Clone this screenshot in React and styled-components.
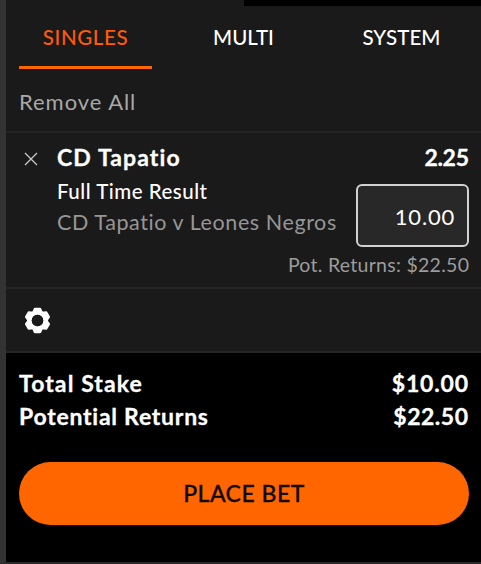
import React from "react";
import styled, { createGlobalStyle } from "styled-components";

const Global = createGlobalStyle`
  *, *::before, *::after { box-sizing: border-box; }
  body {
    margin: 0;
    background: #1a1a1a;
    font-family: "Lato", "Liberation Sans", sans-serif;
    font-variant-ligatures: none;
  }
  button, input { font: inherit; margin: 0; }
`;

const Slip = styled.main`
  width: 481px;
  height: 564px;
  overflow: hidden;
  display: flex;
  flex-direction: column;
  border-left: 6px solid #333;
  border-bottom: 2px solid #2b2829;
  background: #1a1a1a;
  color: #fff;
`;

const TopEdge = styled.div`
  flex: none;
  height: 6px;
  margin-left: 238px;
  background: #000;
`;

const Tabs = styled.nav`
  flex: none;
  display: flex;
  gap: 25px;
  height: 63px;
  padding-left: 13px;
`;

const Tab = styled.button`
  width: 133px;
  height: 63px;
  padding: 1px 0 0;
  border: 0;
  border-bottom: 3px solid ${(p) => (p.$active ? "#ff6600" : "transparent")};
  background: none;
  color: ${(p) => (p.$active ? "#ff5a0a" : "#fff")};
  font-size: 20.5px;
  font-weight: 500;
  letter-spacing: ${(p) => p.$track || 0}px;
  line-height: 60px;
  white-space: nowrap;
  text-align: center;
`;

const Actions = styled.div`
  flex: none;
  height: 64px;
  padding: 0 13px;
  border-bottom: 2px solid #242424;
`;

const Label = styled.span`
  display: block;
  white-space: nowrap;
  color: ${(p) => p.$color || "#fff"};
  font-size: ${(p) => p.$size}px;
  font-weight: ${(p) => p.$weight || 400};
  line-height: ${(p) => p.$line}px;
  letter-spacing: ${(p) => p.$track || 0}px;
  margin-right: ${(p) => -(p.$track || 0)}px;
  -webkit-text-stroke: ${(p) => (p.$weight === 700 ? 0.3 : 0)}px currentColor;
`;

const Selection = styled.section`
  flex: none;
  height: 156px;
  display: grid;
  grid-template-columns: 38px 1fr 113px;
  grid-template-rows: 51px 63px 40px;
  padding: 0 12px 0 13px;
  border-bottom: 2px solid #242424;
`;

const Remove = styled.button`
  grid-row: 1 / 3;
  align-self: start;
  display: flex;
  padding: 19px 0 0 5px;
  border: 0;
  background: none;
`;

const Details = styled.div`
  grid-row: 1 / 3;
  min-width: 0;
`;

const Odds = styled.div`
  display: flex;
  justify-content: flex-end;
`;

const Stake = styled.input`
  width: 113px;
  height: 63px;
  padding: 2px 12px 0 0;
  border: 2px solid #d2d2d2;
  border-radius: 6px;
  background: #282828;
  color: #fff;
  font-size: 22px;
  letter-spacing: 0.8px;
  text-align: right;
  outline: none;
`;

const Returns = styled.div`
  grid-column: 1 / 4;
  display: flex;
  justify-content: flex-end;
`;

const Settings = styled.div`
  flex: none;
  height: 64px;
  display: flex;
  align-items: center;
  padding-left: 18px;
  border-bottom: 2px solid #242424;
`;

const Footer = styled.footer`
  flex: 1;
  padding: 14px 13px 0;
  background: #000;
`;

const TotalRow = styled.div`
  display: flex;
  justify-content: space-between;
  height: 33px;
`;

const PlaceBet = styled.button`
  display: block;
  width: 450px;
  height: 63px;
  margin-top: 29px;
  padding: 0 0 1px;
  border: 0;
  border-radius: 32px;
  background: #ff6600;
  color: #120700;
  font-size: 23px;
  font-weight: 500;
  letter-spacing: 0.5px;
  line-height: 60px;
  -webkit-text-stroke: 0.3px currentColor;
`;

function Cross() {
  return (
    <svg width="14" height="14" viewBox="0 0 14 14" stroke="#c9c9c9" strokeWidth="1.3">
      <path d="M1 1 13 13M13 1 1 13" />
    </svg>
  );
}

function Gear() {
  return (
    <svg width="27" height="27" viewBox="-13.5 -13.5 27 27">
      <g fill="#fff">
        {[0, 60, 120, 180, 240, 300].map((a) => (
          <path key={a} transform={`rotate(${a})`} d="M-5.4-8-3.7-12Q-3.4-12.8-2.5-12.8H2.5Q3.4-12.8 3.7-12L5.4-8Z" />
        ))}
      </g>
      <circle r="8" fill="none" stroke="#fff" strokeWidth="4.6" />
      <circle r="5.8" fill="#1a1a1a" />
    </svg>
  );
}

export default function App() {
  return (
    <>
      <Global />
      <Slip>
        <TopEdge />
        <Tabs>
          <Tab $active $track={0.65}>SINGLES</Tab>
          <Tab>MULTI</Tab>
          <Tab $track={0.1}>SYSTEM</Tab>
        </Tabs>
        <Actions>
          <Label $size={22} $line={66} $track={0.95} $color="#a8a8a8">Remove All</Label>
        </Actions>
        <Selection>
          <Remove aria-label="Remove selection"><Cross /></Remove>
          <Details>
            <Label $size={23} $line={49} $weight={700} $track={1.1}>CD Tapatio</Label>
            <Label $size={20.5} $line={18} $weight={500} $track={0.5}>Full Time Result</Label>
            <Label $size={21.5} $line={44} $track={0.58} $color="#969696">CD Tapatio v Leones Negros</Label>
          </Details>
          <Odds><Label $size={23} $line={49} $weight={700} $track={-0.3}>2.25</Label></Odds>
          <Stake defaultValue="10.00" aria-label="Stake" />
          <Returns><Label $size={19.5} $line={36} $track={0.28} $color="#9c9c9c">Pot. Returns: $22.50</Label></Returns>
        </Selection>
        <Settings><Gear /></Settings>
        <Footer>
          <TotalRow>
            <Label $size={23} $line={33} $weight={700} $track={1.1}>Total Stake</Label>
            <Label $size={23} $line={33} $weight={700} $track={0.8}>$10.00</Label>
          </TotalRow>
          <TotalRow>
            <Label $size={23} $line={33} $weight={700} $track={0.75}>Potential Returns</Label>
            <Label $size={23} $line={33} $weight={700} $track={0.5}>$22.50</Label>
          </TotalRow>
          <PlaceBet>PLACE BET</PlaceBet>
        </Footer>
      </Slip>
    </>
  );
}
